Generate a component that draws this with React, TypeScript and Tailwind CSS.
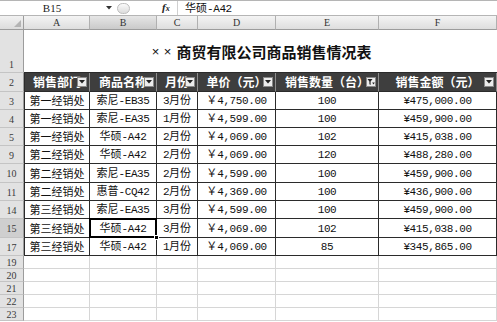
import React from "react";

const W = ["w-[66px]", "w-[67px]", "w-[41px]", "w-[78px]", "w-[103px]", "w-[118px]"];
const LETTERS = ["A", "B", "C", "D", "E", "F"];

type RowData = { n: string; h: string; cells: string[] };

const DATA: RowData[] = [
  { n: "3", h: "h-[18px]", cells: ["第一经销处", "索尼-EB35", "3月份", "￥4,750.00", "100", "¥475,000.00"] },
  { n: "4", h: "h-[18px]", cells: ["第一经销处", "索尼-EA35", "1月份", "￥4,599.00", "100", "¥459,900.00"] },
  { n: "5", h: "h-[18px]", cells: ["第一经销处", "华硕-A42", "2月份", "￥4,069.00", "102", "¥415,038.00"] },
  { n: "9", h: "h-[18px]", cells: ["第二经销处", "华硕-A42", "2月份", "￥4,069.00", "120", "¥488,280.00"] },
  { n: "10", h: "h-[19px]", cells: ["第二经销处", "索尼-EA35", "2月份", "￥4,599.00", "100", "¥459,900.00"] },
  { n: "11", h: "h-[18px]", cells: ["第二经销处", "惠普-CQ42", "2月份", "￥4,369.00", "100", "¥436,900.00"] },
  { n: "14", h: "h-[18px]", cells: ["第三经销处", "索尼-EA35", "3月份", "￥4,599.00", "100", "¥459,900.00"] },
  { n: "15", h: "h-[19px]", cells: ["第三经销处", "华硕-A42", "3月份", "￥4,069.00", "102", "¥415,038.00"] },
  { n: "17", h: "h-[18px]", cells: ["第三经销处", "华硕-A42", "1月份", "￥4,069.00", "85", "¥345,865.00"] },
];

const HEADERS = ["销售部门", "商品名称", "月份", "单价（元）", "销售数量（台）", "销售金额（元）"];

function Mixed({ text }: { text: string }) {
  const parts = text.split(/([\x00-\x7F¥]+)/).filter(Boolean);
  return (
    <>
      {parts.map((p, i) =>
        /^[\x00-\x7F¥]+$/.test(p) ? (
          <span key={i} className="font-['Liberation_Mono',monospace] text-[11px] tracking-[-0.4px]">
            {p}
          </span>
        ) : (
          <span key={i}>{p}</span>
        )
      )}
    </>
  );
}

function FilterBtn({ active }: { active?: boolean }) {
  return (
    <div className="absolute right-[2px] top-[4px] flex h-[10px] w-[10px] items-center justify-center border border-[#8a8a8a] bg-[#ececec]">
      {active ? (
        <svg width="8" height="8" viewBox="0 0 8 8">
          <polygon points="0.5,1 5.5,1 3.6,3.6 3.6,7 2.4,6.2 2.4,3.6" fill="#222" />
          <polygon points="5.2,4.5 7.8,4.5 6.5,6.5" fill="#222" />
        </svg>
      ) : (
        <svg width="6" height="4" viewBox="0 0 6 4">
          <polygon points="0,0 6,0 3,3.5" fill="#222" />
        </svg>
      )}
    </div>
  );
}

function RowHead({ label, selected, end }: { label: string; selected?: boolean; end?: boolean }) {
  return (
    <div
      className={`flex w-[24px] shrink-0 justify-center border-r border-b border-r-[#9c9c9c] border-b-[#c4c4c4] font-['Liberation_Serif',serif] text-[10px] leading-[12px] text-[#3a3a3a] ${
        selected ? "bg-[#cfcfcf]" : "bg-[#e2e2e2]"
      } ${end ? "items-end pb-[1px]" : "items-center pt-[2px]"}`}
    >
      {label}
    </div>
  );
}

export default function App() {
  return (
    <div className="h-[322px] w-[497px] overflow-hidden bg-white font-['Noto_Sans_CJK_SC',sans-serif] text-[#111]">
      {/* formula bar */}
      <div className="flex h-[16px] items-center border-t border-b border-[#b5b5b5] bg-white">
        <div className="w-[104px] text-center font-['Liberation_Serif',serif] text-[11px] leading-[14px] text-[#222]">
          B15
        </div>
        <div className="flex w-[10px] justify-center">
          <svg width="6" height="4" viewBox="0 0 6 4">
            <polygon points="0,0 6,0 3,3.5" fill="#333" />
          </svg>
        </div>
        <div className="ml-[3px] h-[11px] w-[13px] rounded-full border border-[#bdbdbd] bg-linear-to-b from-[#fafafa] to-[#dcdcdc]" />
        <div className="w-[32px]" />
        <div className="w-[12px] font-['Liberation_Serif',serif] text-[11px] font-bold italic leading-[14px] text-[#222]">
          f<span className="text-[8px]">x</span>
        </div>
        <div className="ml-[3px] h-[14px] border-l border-[#d0d0d0]" />
        <div className="pl-[7px] text-[11px] leading-[14px] text-[#111]">
          <Mixed text="华硕-A42" />
        </div>
      </div>

      {/* column headers */}
      <div className="flex h-[14px]">
        <div className="relative w-[24px] shrink-0 border-r border-b border-[#9c9c9c] bg-linear-to-b from-[#f2f2f2] to-[#dcdcdc]">
          <svg className="absolute right-[2px] bottom-[2px]" width="7" height="7" viewBox="0 0 7 7">
            <polygon points="7,0 7,7 0,7" fill="#b4b4b4" />
          </svg>
        </div>
        {LETTERS.map((l, i) => (
          <div
            key={l}
            className={`${W[i]} flex shrink-0 items-center justify-center border-r border-b border-r-[#b0b0b0] border-b-[#9c9c9c] font-['Liberation_Serif',serif] text-[10px] text-[#333] ${
              i === 1 ? "bg-linear-to-b from-[#e6e6e6] to-[#cacaca]" : "bg-linear-to-b from-[#f4f4f4] to-[#dedede]"
            }`}
          >
            {l}
          </div>
        ))}
      </div>

      {/* row 1: title */}
      <div className="flex h-[43px]">
        <RowHead label="1" end />
        <div className="flex w-[473px] shrink-0 items-center justify-center border-b border-[#2b2b2b] pt-[2px] text-[15px] font-bold text-[#111]">
          <span className="inline-block w-[12px] text-center font-['Liberation_Sans',sans-serif] text-[13px] font-normal">×</span>
          <span className="inline-block w-[12px] text-center font-['Liberation_Sans',sans-serif] text-[13px] font-normal">×</span>
          <span className="ml-[3px]">商贸有限公司商品销售情况表</span>
        </div>
      </div>

      {/* row 2: header */}
      <div className="flex h-[19px]">
        <RowHead label="2" />
        {HEADERS.map((t, i) => (
          <div
            key={t}
            className={`${W[i]} relative flex shrink-0 items-center justify-center overflow-hidden whitespace-nowrap border-r border-b border-r-[#8c8c8c] border-b-[#2b2b2b] bg-[#3e3e3e] text-[12px] font-bold leading-[14px] text-white ${
              i === 0 ? "border-l border-l-[#2b2b2b]" : ""
            }`}
          >
            <span>{t}</span>
            <FilterBtn active={i === 4} />
          </div>
        ))}
      </div>

      {/* data rows */}
      {DATA.map((r) => (
        <div key={r.n} className={`flex ${r.h}`}>
          <RowHead label={r.n} selected={r.n === "15"} />
          {r.cells.map((c, i) => (
            <div
              key={i}
              className={`${W[i]} relative flex shrink-0 items-center justify-center whitespace-nowrap border-r border-b border-[#2b2b2b] text-[11px] leading-[13px] ${
                i === 0 ? "border-l" : ""
              }`}
            >
              <span>
                <Mixed text={c} />
              </span>
              {r.n === "15" && i === 1 && (
                <>
                  <div className="absolute -top-px -right-px -bottom-px -left-px z-10 border-2 border-black" />
                  <div className="absolute -right-[3px] -bottom-[3px] z-20 h-[5px] w-[5px] border border-white bg-black" />
                </>
              )}
            </div>
          ))}
        </div>
      ))}

      {/* empty rows */}
      {["19", "20", "21", "22", "23"].map((n) => (
        <div key={n} className="flex h-[13px]">
          <RowHead label={n} />
          {W.map((w, i) => (
            <div key={i} className={`${w} shrink-0 border-r border-b border-[#d6d6d6]`} />
          ))}
        </div>
      ))}
    </div>
  );
}
